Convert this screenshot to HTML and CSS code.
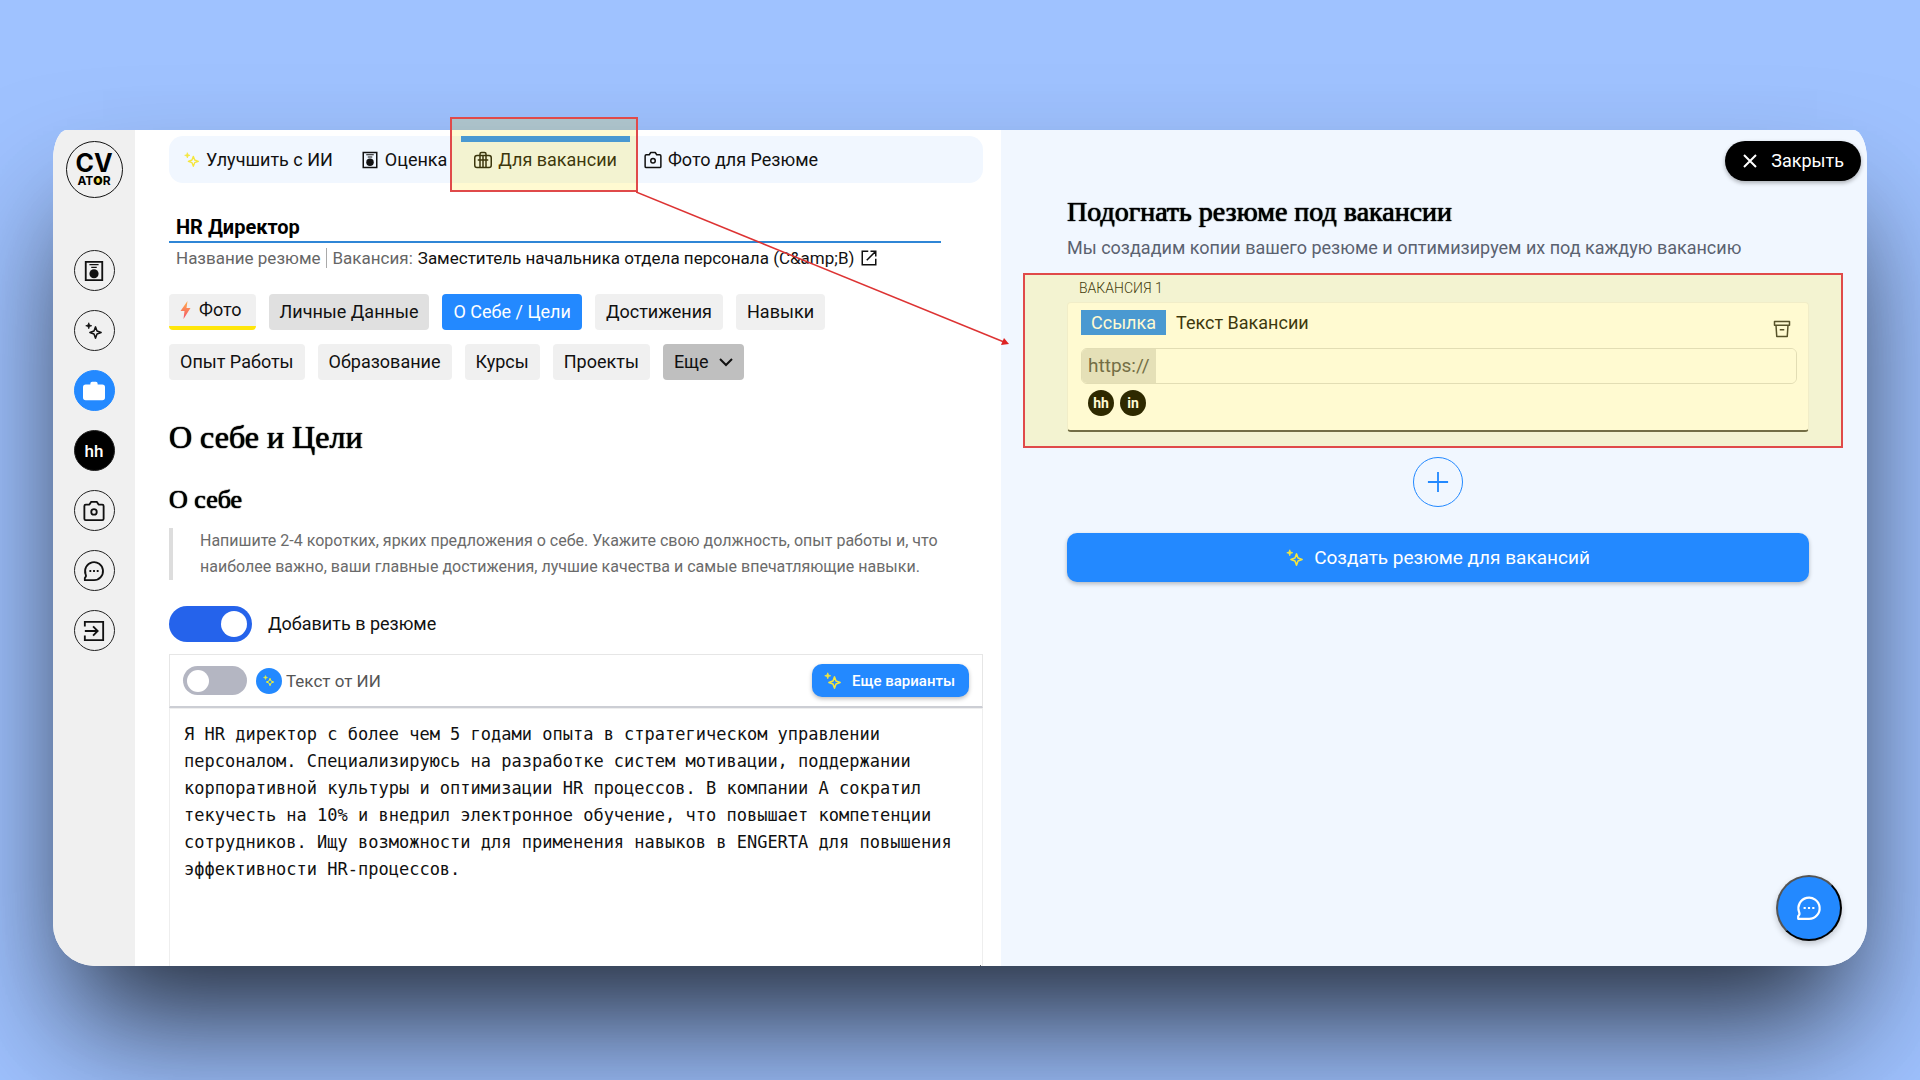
FILE: index.html
```html
<!DOCTYPE html>
<html lang="ru">
<head>
  <meta charset="UTF-8">
  <meta name="viewport" content="width=device-width, initial-scale=1.0">
  <title>CVATOR — Подогнать резюме под вакансии</title>
  <link rel="stylesheet" href="styles.css">
</head>
<body>

  <svg class="sprite" aria-hidden="true">
    <symbol id="i-sparkle" viewBox="0 0 24 24">
      <path d="M14 6.500l2 5.500 5.500 2-5.500 2-2 5.500-2-5.500-5.500-2 5.500-2z" fill="none" stroke="currentColor" stroke-width="2" stroke-linejoin="round"/>
      <path d="M5 1l1 3 3 1-3 1-1 3-1-3-3-1 3-1z" fill="currentColor" stroke="currentColor"/>
    </symbol>
    <symbol id="i-cv" viewBox="0 0 24 24">
      <path d="M3 2h18v20H3z" fill="none" stroke="currentColor" stroke-width="2"/>
      <path d="M7 5h10M9 8h6" stroke="currentColor" stroke-width="1.500"/>
      <circle cx="12" cy="15" r="5" fill="currentColor"/>
    </symbol>
    <symbol id="i-bag" viewBox="0 0 24 24">
      <g fill="none" stroke="currentColor" stroke-width="2">
        <rect x="1" y="6" width="22" height="16" rx="3"/>
        <path d="M8 22V4q0-2 2-2h4q2 0 2 2v18M12 6v16M5 12h14"/>
      </g>
    </symbol>
    <symbol id="i-camera" viewBox="0 0 24 24">
      <g fill="none" stroke="currentColor" stroke-width="2" stroke-linejoin="round">
        <path d="M3 5h4l2-3h6l2 3h4q1.500 0 1.500 1.500v14q0 1.500-1.500 1.500H3q-1.500 0-1.500-1.500v-14Q1.500 5 3 5z"/>
        <circle cx="12" cy="13" r="3"/>
      </g>
    </symbol>
    <symbol id="i-chat" viewBox="0 0 24 24">
      <path d="M2 22v-2.500q2-1.500 .8-4A9.800 9.800 0 1 1 12 22z" fill="none" stroke="currentColor" stroke-width="2" stroke-linejoin="round"/>
      <path d="M7 11h2v2H7zM11 11h2v2h-2zM15 11h2v2h-2z" fill="currentColor"/>
    </symbol>
    <symbol id="i-exit" viewBox="0 0 24 24">
      <path d="M2 7V2h20v20H2v-5M2 12h13M11 7l5 5-5 5" fill="none" stroke="currentColor" stroke-width="2"/>
    </symbol>
    <symbol id="i-open" viewBox="0 0 24 24">
      <path d="M11 3H3v18h18v-8M14 3h7v7M21 3L9 15" fill="none" stroke="currentColor" stroke-width="2"/>
    </symbol>
    <symbol id="i-trash" viewBox="0 0 24 24">
      <path d="M2 2h20v5H2zM4 7l1 15h14l1-15M9 13h6" fill="none" stroke="currentColor" stroke-width="2" stroke-linejoin="round"/>
    </symbol>
  </svg>

  <div class="stage">
    <div class="window">

      <nav class="sidebar">
        <a class="logo" href="#">
          <span class="logo-cv">CV</span>
          <span class="logo-ator">AT<b>O</b>R</span>
        </a>
        <a class="side-link" href="#" aria-label="Резюме"><svg class="icon-md"><use href="#i-cv"/></svg></a>
        <a class="side-link" href="#" aria-label="Улучшить с ИИ"><svg class="icon-sm"><use href="#i-sparkle"/></svg></a>
        <a class="side-link active" href="#" aria-label="Вакансии">
          <svg class="icon-md" viewBox="0 0 24 24"><path d="M8 4q0-2 2-2h4q2 0 2 2v1h5q3 0 3 3v11q0 3-3 3H3q-3 0-3-3V8q0-3 3-3h5z" fill="currentColor"/></svg>
        </a>
        <a class="side-link dark" href="#">hh</a>
        <a class="side-link" href="#" aria-label="Фото"><svg class="icon-md"><use href="#i-camera"/></svg></a>
        <a class="side-link" href="#" aria-label="Чат"><svg class="icon-md"><use href="#i-chat"/></svg></a>
        <a class="side-link" href="#" aria-label="Выход"><svg class="icon-md"><use href="#i-exit"/></svg></a>
      </nav>

      <main class="editor">
        <div class="tabs">
          <button class="tab"><svg class="icon-xs yellow"><use href="#i-sparkle"/></svg>Улучшить с ИИ</button>
          <button class="tab"><svg class="icon-sm"><use href="#i-cv"/></svg>Оценка</button>
          <button class="tab current"><svg class="icon-sm"><use href="#i-bag"/></svg>Для вакансии</button>
          <button class="tab"><svg class="icon-sm"><use href="#i-camera"/></svg>Фото для Резюме</button>
          <div class="callout callout-tab">
            <svg class="arrow" viewBox="0 0 374 156">
              <path d="M0 2L368 152" stroke="#dd3333" stroke-width="1.500"/>
              <path d="M373 154l-8 1 3-7z" fill="#dd2222"/>
            </svg>
          </div>
        </div>

        <div class="editor-body">
          <input class="resume-name" id="resume-name" type="text" value="HR Директор">
          <div class="resume-info">
            <label for="resume-name">Название резюме</label>
            <span class="job">Вакансия:</span>
            <a href="#">Заместитель начальника отдела персонала (C&amp;amp;B)<svg class="icon-sm"><use href="#i-open"/></svg></a>
          </div>

          <div class="chips">
            <button class="chip photo">
              <svg class="bolt" viewBox="0 0 10 18">
                <defs><linearGradient id="fire" x2="0" y2="1"><stop stop-color="#ffb04a"/><stop offset="1" stop-color="#f4506a"/></linearGradient></defs>
                <path d="M7 0L0 10h4l-1 8 7-11H6z" fill="url(#fire)"/>
              </svg>Фото</button>
            <button class="chip grey">Личные Данные</button>
            <button class="chip blue">О Себе / Цели</button>
            <button class="chip">Достижения</button>
            <button class="chip">Навыки</button>
          </div>
          <div class="chips">
            <button class="chip">Опыт Работы</button>
            <button class="chip">Образование</button>
            <button class="chip">Курсы</button>
            <button class="chip">Проекты</button>
            <button class="chip more">Еще
              <svg class="chevron" viewBox="0 0 14 14"><path d="M1 4l6 6 6-6" fill="none" stroke="currentColor" stroke-width="2"/></svg>
            </button>
          </div>

          <h1>О себе и Цели</h1>
          <h2>О себе</h2>
          <blockquote>Напишите 2-4 коротких, ярких предложения о себе. Укажите свою должность, опыт работы и, что наиболее важно, ваши главные достижения, лучшие качества и самые впечатляющие навыки.</blockquote>

          <label class="switch-row"><input class="switch" type="checkbox" checked>Добавить в резюме</label>

          <div class="ai-bar">
            <label class="ai-label">
              <input class="switch small" type="checkbox">
              <span class="ai-badge"><svg viewBox="0 0 24 24"><use href="#i-sparkle"/></svg></span>
              Текст от ИИ
            </label>
            <button class="btn variants"><svg class="icon-sm yellow"><use href="#i-sparkle"/></svg>Еще варианты</button>
          </div>
          <textarea class="about" aria-label="О себе">Я HR директор с более чем 5 годами опыта в стратегическом управлении персоналом. Специализируюсь на разработке систем мотивации, поддержании корпоративной культуры и оптимизации HR процессов. В компании А сократил текучесть на 10% и внедрил электронное обучение, что повышает компетенции сотрудников. Ищу возможности для применения навыков в ENGERTA для повышения эффективности HR-процессов.</textarea>
        </div>
      </main>

      <section class="jobs">
        <button class="close">
          <svg class="cross" viewBox="0 0 14 14"><path d="M1 1l12 12M13 1L1 13" stroke="currentColor" stroke-width="2"/></svg>Закрыть</button>
        <h2 class="jobs-title">Подогнать резюме под вакансии</h2>
        <p class="jobs-text">Мы создадим копии вашего резюме и оптимизируем их под каждую вакансию</p>

        <div class="vacancy">
          <div class="vacancy-name">ВАКАНСИЯ 1</div>
          <div class="card">
            <div class="card-head">
              <button class="kind on">Ссылка</button>
              <button class="kind">Текст Вакансии</button>
              <button class="remove" aria-label="Удалить"><svg class="icon-sm"><use href="#i-trash"/></svg></button>
            </div>
            <div class="url">
              <label for="url">https://</label>
              <input id="url" type="text">
            </div>
            <div class="sites"><span>hh</span><span>in</span></div>
          </div>
          <div class="callout callout-card"></div>
        </div>

        <button class="add" aria-label="Добавить вакансию">
          <svg viewBox="0 0 24 24"><path d="M12 1v22M1 12h22" stroke="currentColor" stroke-width="2"/></svg>
        </button>
        <button class="btn create"><svg class="icon-sm yellow"><use href="#i-sparkle"/></svg>Создать резюме для вакансий</button>

        <button class="fab" aria-label="Чат"><svg viewBox="0 0 24 24"><use href="#i-chat"/></svg></button>
      </section>

    </div>
  </div>

</body>
</html>
```
FILE: styles.css
```css
* {
  box-sizing: border-box;
}

body {
  margin: 0;
  background: #9fc2ff;
  color: #111;
  font-family: Roboto, "Liberation Sans", sans-serif;
  font-size: 18px;
  line-height: 26px;
}

button, input, textarea {
  font: inherit;
  color: inherit;
}

button {
  border: none;
  background: none;
  padding: 0;
  cursor: pointer;
}

a {
  color: inherit;
  text-decoration: none;
}

svg {
  flex: none;
}

.sprite {
  position: absolute;
  width: 0;
  height: 0;
}

.icon-xs { width: 16px; height: 16px; }
.icon-sm { width: 18px; height: 18px; }
.icon-md { width: 22px; height: 22px; }
.yellow { color: #f5e63c; }

.stage {
  display: flex;
  height: 100vh;
  min-height: 900px;
  padding: 130px 53px 114px;
  overflow: hidden;
}

.window {
  flex: 1;
  display: grid;
  grid-template-columns: 82px 1fr 1fr;
  background: #fff;
  border-radius: 14px 14px 42px 42px / 30px 30px 42px 42px;
  box-shadow: 0 80px 130px -10px rgba(0, 0, 0, 0.5), 0 60px 100px -50px rgba(0, 0, 0, 0.6);
}

/* sidebar */
.sidebar {
  display: flex;
  flex-direction: column;
  align-items: center;
  gap: 19px;
  padding-top: 11px;
  background: #f0f0f0;
  border-radius: 14px 0 0 42px / 30px 0 0 42px;
}

.logo {
  display: flex;
  flex-direction: column;
  align-items: center;
  justify-content: center;
  width: 57px;
  height: 57px;
  margin-bottom: 33px;
  border: 1px solid #111;
  border-radius: 50%;
  color: #000;
  font-family: Inter, sans-serif;
  font-weight: 700;
}

.logo-cv {
  font-size: 25px;
  line-height: 22px;
}

.logo-ator {
  font-size: 12px;
  line-height: 13px;
}

.logo-ator b {
  background: radial-gradient(circle, #ffe24a 4px, transparent 5px);
}

.side-link {
  display: flex;
  align-items: center;
  justify-content: center;
  width: 41px;
  height: 41px;
  border: 1px solid #222;
  border-radius: 50%;
}

.side-link.active {
  background: #2389ff;
  border-color: #2389ff;
  color: #fff;
}

.side-link.dark {
  background: #000;
  color: #fff;
  font-size: 17px;
  font-weight: 500;
}

/* left column */
.editor {
  display: flex;
  flex-direction: column;
  min-width: 0;
  min-height: 0;
  padding: 6px 18px 0 34px;
}

.tabs {
  position: relative;
  display: flex;
  flex: none;
  height: 47px;
  padding-left: 1px;
  background: #f1f7ff;
  border-radius: 14px;
}

.tab {
  display: flex;
  align-items: center;
  gap: 6px;
  padding: 0 14px;
  white-space: nowrap;
}

.tab.current {
  padding: 0 13px;
  box-shadow: inset 0 6px #2389ff;
}

.editor-body {
  flex: 1;
  display: flex;
  flex-direction: column;
  min-height: 0;
  margin-top: 30px;
  overflow: hidden;
}

.resume-name {
  flex: none;
  height: 30px;
  margin-right: 42px;
  padding: 0 7px;
  border: none;
  border-bottom: 2px solid #2f86d6;
  outline: none;
  font-size: 20px;
  font-weight: 700;
  color: #000;
}

.resume-info {
  display: flex;
  margin: 2px 0 23px;
  padding-left: 7px;
  font-size: 17px;
  color: #666;
}

.resume-info .job {
  margin: 3px 5px;
  padding-left: 6px;
  border-left: 1px solid #aaa;
  line-height: 20px;
}

.resume-info a {
  display: flex;
  align-items: center;
  gap: 6px;
  color: #111;
}

.chips {
  display: flex;
  gap: 13px;
  margin-bottom: 14px;
}

.chip {
  display: flex;
  align-items: center;
  height: 36px;
  padding: 0 11px;
  border-radius: 4px;
  background: #f0f0f0;
  white-space: nowrap;
}

.chip.photo {
  gap: 8px;
  padding-right: 14px;
  border-bottom: 4px solid #ffe60a;
}

.chip.grey { background: #e0e0e0; }
.chip.blue { background: #2389ff; color: #fff; }
.chip.more { gap: 10px; background: #bfbfbf; }

.bolt { width: 11px; height: 18px; }
.chevron { width: 14px; height: 14px; }

h1, h2 {
  margin: 0;
  color: #000;
  font-family: "Liberation Serif", serif;
  font-weight: 400;
  text-shadow: 0 0 1px #000, 0 0 1px #000;
}

h1 {
  margin-top: 23px;
  font-size: 32px;
  line-height: 40px;
}

h2 {
  margin-top: 26px;
  font-size: 26px;
  line-height: 34px;
}

blockquote {
  margin: 11px 0 26px;
  padding: 0 0 0 27px;
  border-left: 4px solid #ddd;
  font-size: 16px;
  color: #6b6b6b;
}

.switch-row {
  display: flex;
  align-items: center;
  gap: 16px;
  margin-bottom: 12px;
}

.switch {
  appearance: none;
  display: flex;
  align-items: center;
  width: 83px;
  height: 36px;
  margin: 0;
  padding: 0 5px;
  border-radius: 18px;
  background: #b4b6c2;
}

.switch::before {
  content: "";
  width: 26px;
  height: 26px;
  border-radius: 50%;
  background: #fff;
}

.switch:checked {
  justify-content: flex-end;
  background: #2563eb;
}

.switch.small {
  width: 64px;
  height: 29px;
  padding: 0 4px;
}

.switch.small::before {
  width: 22px;
  height: 22px;
}

.ai-bar {
  display: flex;
  align-items: center;
  justify-content: space-between;
  flex: none;
  height: 54px;
  padding: 0 13px;
  border: 1px solid #e6e6e6;
  border-bottom: 2px solid #ccced4;
}

.ai-label {
  display: flex;
  align-items: center;
  gap: 4px;
  font-size: 17px;
  color: #555;
}

.ai-badge {
  display: flex;
  align-items: center;
  justify-content: center;
  width: 26px;
  height: 26px;
  margin-left: 5px;
  border-radius: 50%;
  background: #2389ff;
  color: #e9f03c;
}

.ai-badge svg {
  width: 12px;
  height: 12px;
}

.btn {
  display: flex;
  align-items: center;
  justify-content: center;
  gap: 10px;
  border-radius: 10px;
  background: #2389ff;
  box-shadow: 0 2px 4px rgba(0, 0, 0, 0.25);
  color: #fff;
}

.variants {
  height: 33px;
  padding: 0 14px 0 12px;
  font-size: 15px;
  font-weight: 500;
}

.about {
  flex: 1;
  margin-bottom: -8px;
  padding: 12px 14px;
  border: 1px solid #eee;
  outline: none;
  resize: vertical;
  font-family: "DejaVu Sans Mono", monospace;
  font-size: 17px;
  line-height: 27px;
}

/* right column */
.jobs {
  position: relative;
  display: flex;
  flex-direction: column;
  padding: 11px 58px 0 66px;
  background: #f1f7ff;
  border-radius: 0 14px 42px 0 / 0 30px 42px 0;
}

.close {
  display: flex;
  align-items: center;
  align-self: flex-end;
  gap: 14px;
  height: 40px;
  margin-right: -52px;
  padding: 0 17px 0 18px;
  border-radius: 20px;
  background: #000;
  box-shadow: 0 2px 4px rgba(0, 0, 0, 0.3);
  color: #fff;
}

.cross {
  width: 14px;
  height: 14px;
}

.jobs-title {
  margin-top: 12px;
  font-size: 28px;
  line-height: 38px;
}

.jobs-text {
  margin: 4px 0 17px;
  color: #5b6270;
}

.vacancy {
  position: relative;
}

.vacancy-name {
  margin-bottom: 4px;
  padding-left: 12px;
  font-size: 14px;
  line-height: 20px;
  font-weight: 300;
}

.card {
  padding: 7px 11px 14px 13px;
  border: 1px solid #eef0f4;
  border-bottom: 2px solid #555;
  border-radius: 4px;
  background: #fff;
}

.card-head {
  display: flex;
  align-items: flex-start;
  height: 38px;
}

.kind {
  height: 25px;
  padding: 0 10px;
}

.kind.on {
  background: #2389ff;
  color: #fff;
}

.remove {
  align-self: center;
  margin: 0 6px 0 auto;
  color: #333;
}

.remove svg {
  display: block;
}

.url {
  display: flex;
  height: 36px;
  border: 1px solid #dcdcdc;
  border-radius: 6px;
  overflow: hidden;
}

.url label {
  padding: 4px 6px;
  background: #e0e0e0;
  font-size: 19px;
  color: #555;
}

.url input {
  flex: 1;
  min-width: 0;
  border: none;
  outline: none;
  background: #fff;
}

.sites {
  display: flex;
  gap: 6px;
  padding: 6px 7px 0;
}

.sites span {
  width: 26px;
  height: 26px;
  border-radius: 50%;
  background: #000;
  color: #fff;
  font-size: 14px;
  font-weight: 700;
  text-align: center;
}

.add {
  display: flex;
  align-items: center;
  justify-content: center;
  align-self: center;
  width: 50px;
  height: 50px;
  margin: 25px 0 26px;
  border: 1px solid #2389ff;
  border-radius: 50%;
  color: #2389ff;
}

.add svg {
  width: 22px;
  height: 22px;
}

.create {
  height: 49px;
  font-size: 19px;
}

.fab {
  position: absolute;
  right: 25px;
  bottom: 25px;
  display: flex;
  align-items: center;
  justify-content: center;
  width: 66px;
  height: 66px;
  border: 2px outset #000;
  border-radius: 50%;
  background: #2389ff;
  box-shadow: 0 3px 6px rgba(0, 0, 0, 0.2);
  color: #fff;
}

.fab svg {
  width: 26px;
  height: 26px;
}

/* highlight marks */
.callout {
  position: absolute;
  z-index: 5;
  border: 2px solid #e04a4a;
  background: rgba(255, 230, 0, 0.18);
  pointer-events: none;
}

.callout-tab {
  left: 281px;
  top: -19px;
  width: 188px;
  height: 75px;
}

.callout-card {
  inset: -5px -34px -16px -44px;
}

.arrow {
  position: absolute;
  left: 100%;
  top: 100%;
  width: 374px;
  height: 156px;
}
```
